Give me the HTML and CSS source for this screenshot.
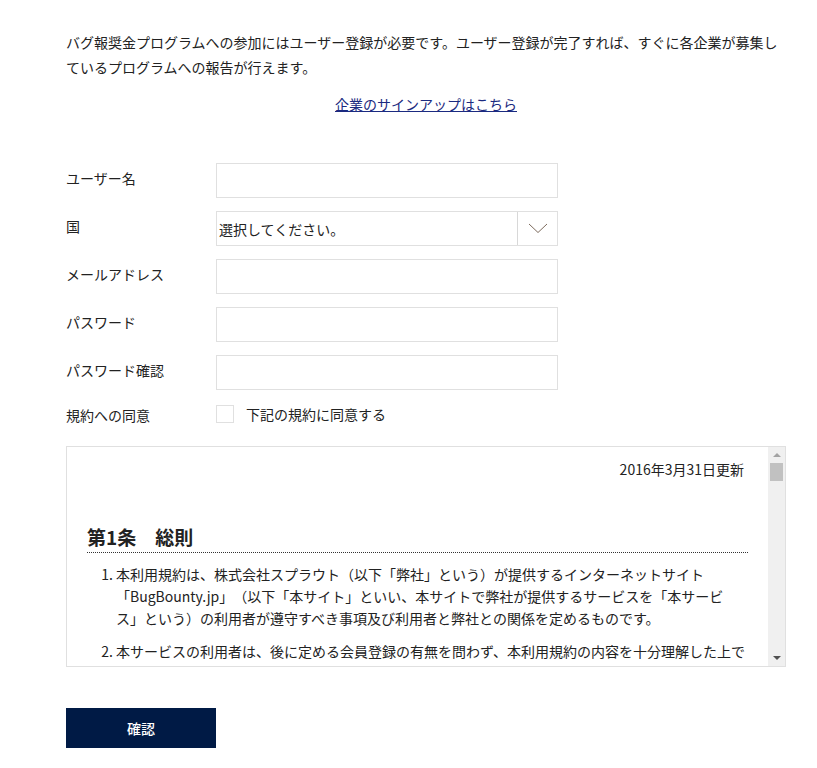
FILE: index.html
```html
<!DOCTYPE html>
<html lang="ja">
<head>
<meta charset="utf-8">
<title>ユーザー登録</title>
<link rel="stylesheet" href="styles.css">
</head>
<body>
<div class="page">
  <p class="intro">バグ報奨金プログラムへの参加にはユーザー登録が必要です。ユーザー登録が完了すれば、すぐに各企業が募集しているプログラムへの報告が行えます。</p>
  <p class="company"><a href="#" class="company-link">企業のサインアップはこちら</a></p>

  <form class="form">
    <div class="row">
      <label class="label">ユーザー名</label>
      <div class="field"></div>
    </div>
    <div class="row">
      <label class="label">国</label>
      <div class="field select">
        <span class="select-text">選択してください。</span>
        <span class="select-arrow">
          <svg width="20" height="11" viewBox="0 0 20 11"><polyline points="1,1 10,9.5 19,1" fill="none" stroke="#7d6b5d" stroke-width="1"/></svg>
        </span>
      </div>
    </div>
    <div class="row">
      <label class="label">メールアドレス</label>
      <div class="field"></div>
    </div>
    <div class="row">
      <label class="label">パスワード</label>
      <div class="field"></div>
    </div>
    <div class="row">
      <label class="label">パスワード確認</label>
      <div class="field"></div>
    </div>
    <div class="row agree-row">
      <label class="label agree-label">規約への同意</label>
      <div class="agree">
        <span class="checkbox"></span>
        <span class="agree-text">下記の規約に同意する</span>
      </div>
    </div>

    <div class="terms">
      <div class="terms-body">
        <p class="updated">2016年3月31日更新</p>
        <h2 class="article">第1条　総則</h2>
        <ol class="clauses">
          <li>本利用規約は、株式会社スプラウト（以下「弊社」という）が提供するインターネットサイト「BugBounty.jp」（以下「本サイト」といい、本サイトで弊社が提供するサービスを「本サービス」という）の利用者が遵守すべき事項及び利用者と弊社との関係を定めるものです。</li>
          <li>本サービスの利用者は、後に定める会員登録の有無を問わず、本利用規約の内容を十分理解した上でその内容を遵守することに同意して本サービスを利用するものとし、本サービスを利用した場合には、当該利用者は本利用規約に同意したものとみなします。</li>
        </ol>
      </div>
      <div class="scrollbar">
        <span class="sb-btn"><span class="tri-up"></span></span>
        <span class="sb-thumb"></span>
        <span class="sb-track"></span>
        <span class="sb-btn"><span class="tri-down"></span></span>
      </div>
    </div>

    <button type="button" class="submit">確認</button>
  </form>
</div>
</body>
</html>
```

FILE: styles.css
```css
* { box-sizing: border-box; }

html, body {
  margin: 0;
  padding: 0;
  background: #ffffff;
}

body {
  font-family: "Noto Sans CJK JP", "Noto Sans", sans-serif;
  font-size: 14px;
  color: #222222;
  text-spacing-trim: space-all;
}

.page {
  width: 720px;
  margin-left: 66px;
  padding-top: 30px;
}

.intro {
  margin: 0;
  line-height: 25px;
}

.company {
  margin: 12px 0 0;
  text-align: center;
  line-height: 25px;
}

.company-link {
  color: #1b2a80;
  text-decoration: underline;
}

.form {
  margin-top: 46px;
}

.row {
  display: flex;
  align-items: center;
  height: 35px;
  margin-bottom: 13px;
}

.label {
  width: 150px;
  flex: none;
  line-height: 20px;
  padding-bottom: 5px;
}

.field {
  width: 342px;
  height: 35px;
  border: 1px solid #e0e0e0;
  background: #fff;
}

.select {
  display: flex;
  align-items: center;
}

.select-text {
  flex: 1;
  padding-left: 2px;
  line-height: 20px;
}

.select-arrow {
  width: 40px;
  height: 100%;
  border-left: 1px solid #d8d8d8;
  display: flex;
  align-items: center;
  justify-content: center;
}

.agree-row {
  height: 30px;
  align-items: flex-start;
}

.agree-label {
  padding-top: 2px;
  padding-bottom: 0;
}

.agree {
  display: flex;
  align-items: center;
  padding-top: 1px;
}

.checkbox {
  width: 18px;
  height: 18px;
  border: 1px solid #e0e0e0;
  background: #fff;
}

.agree-text {
  margin-left: 12px;
  line-height: 20px;
}

.terms {
  display: flex;
  width: 720px;
  height: 221px;
  border: 1px solid #e0e0e0;
}

.terms-body {
  flex: 1;
  overflow: hidden;
  padding: 11px 20px 0 20px;
}

.updated {
  margin: 0;
  text-align: right;
  line-height: 22px;
  padding-right: 4px;
}

.article {
  margin: 44px 0 0;
  font-size: 19px;
  font-weight: bold;
  line-height: 26px;
  padding-bottom: 2px;
  border-bottom: 1px dotted #333;
}

.clauses {
  margin: 10px 0 0;
  padding-left: 29px;
}

.clauses li {
  line-height: 22px;
  margin-bottom: 11px;
}

.scrollbar {
  width: 17px;
  flex: none;
  background: #f0f0f0;
  display: flex;
  flex-direction: column;
}

.sb-btn {
  height: 16px;
  display: flex;
  align-items: center;
  justify-content: center;
}

.tri-up {
  width: 0;
  height: 0;
  border-left: 4px solid transparent;
  border-right: 4px solid transparent;
  border-bottom: 4px solid #a3a3a3;
}

.tri-down {
  width: 0;
  height: 0;
  border-left: 4px solid transparent;
  border-right: 4px solid transparent;
  border-top: 4px solid #505050;
}

.sb-thumb {
  height: 18px;
  margin: 0 2px;
  background: #c1c1c1;
}

.sb-track {
  flex: 1;
}

.submit {
  display: block;
  margin-top: 41px;
  width: 150px;
  height: 40px;
  border: none;
  background: #001a45;
  color: #ffffff;
  font-family: "Noto Sans CJK JP", "Noto Sans", sans-serif;
  font-size: 14px;
  font-weight: 500;
}
```
